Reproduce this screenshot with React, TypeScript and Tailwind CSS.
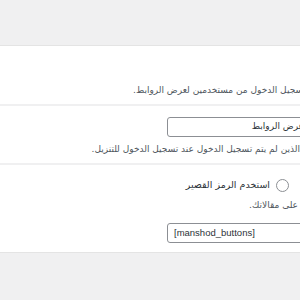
export default function App() {
  const ar = { fontFamily: '"DejaVu Sans", "Noto Sans", sans-serif' };
  return (
    <div className="w-[300px] h-[300px] overflow-hidden bg-[#f0f0f1]">
      <div className="h-[46px] border-b border-[#e4e4e4] bg-[#f0f0f1]" />
      <div className="bg-white h-[206px] overflow-hidden">
        <div dir="rtl" className="w-[320px] flex flex-col" style={ar}>
          <div className="h-[37px]" />
          <p className="pr-[14px] text-[9px] leading-[14px] text-[#50575e] whitespace-nowrap">
            تسجيل الدخول من مستخدمين لعرض الروابط.
          </p>
          <div className="mt-[7px] h-[2px] bg-[#f0f0f1]" />
          <div className="mt-[11px] h-[20px] w-[153px] rounded-[3px] border border-[#8c8f94] bg-white flex items-center pr-[15px] text-[9px] text-[#2c3338] whitespace-nowrap overflow-hidden">
            عرض الروابط
          </div>
          <p className="mt-[5px] pr-[20px] text-[9px] leading-[14px] text-[#50575e] whitespace-nowrap">
            الذين لم يتم تسجيل الدخول عند تسجيل الدخول للتنزيل.
          </p>
          <div className="mt-[7px] h-[2px] bg-[#f0f0f1]" />
          <div className="mt-[13px] pr-[31px] flex items-center gap-[6px]">
            <span className="w-[13px] h-[13px] rounded-full border border-[#8c8f94] bg-white shrink-0" />
            <span className="text-[9.5px] leading-[14px] text-[#2c3338] whitespace-nowrap">استخدم الرمز القصير</span>
          </div>
          <p className="mt-[6px] pr-[22px] text-[9px] leading-[14px] text-[#50575e] whitespace-nowrap">
            على مقالاتك.
          </p>
          <div
            dir="ltr"
            className="mt-[11px] self-start h-[20px] w-[153px] rounded-[3px] border border-[#8c8f94] bg-white flex items-center pl-[6px] text-[9.5px] text-[#2c3338] whitespace-nowrap overflow-hidden"
            style={{ fontFamily: '"Liberation Sans", Arial, sans-serif' }}
          >
            [manshod_buttons]
          </div>
        </div>
      </div>
      <div className="h-px bg-[#e4e4e4]" />
    </div>
  );
}
